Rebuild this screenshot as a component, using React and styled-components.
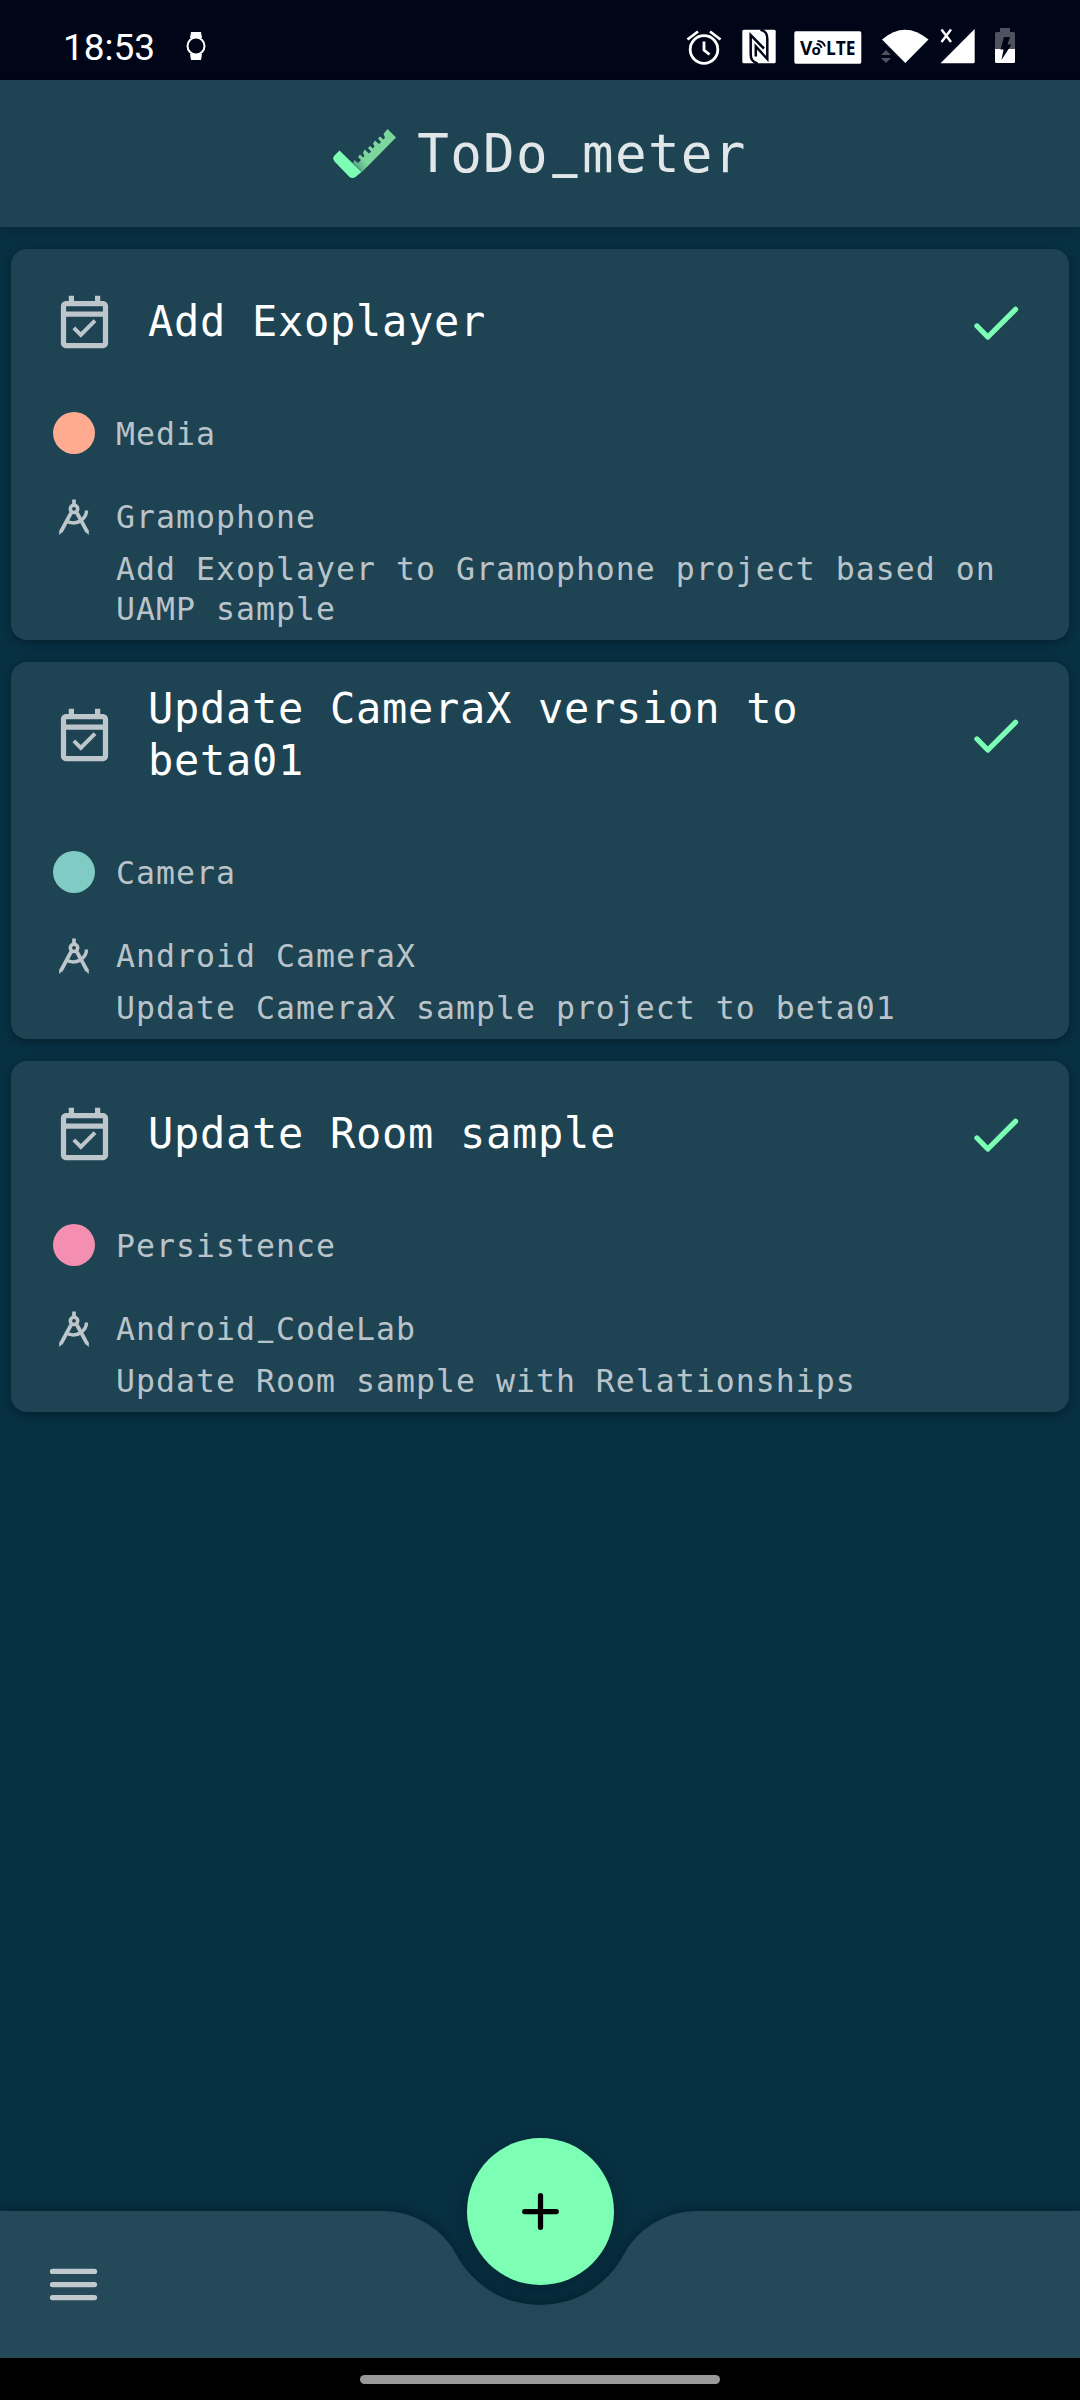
import React from "react";
import styled, { createGlobalStyle } from "styled-components";

const Global = createGlobalStyle`
  html, body { margin: 0; padding: 0; background: #073042; }
  * { box-sizing: border-box; }
  svg { display: block; flex: none; }
`;

const Screen = styled.div`
  width: 1080px;
  height: 2400px;
  display: flex;
  flex-direction: column;
  overflow: hidden;
  background: #073042;
  font-family: "DejaVu Sans Mono", "Liberation Mono", monospace;
`;

const StatusBar = styled.header`
  height: 80px;
  flex: none;
  display: flex;
  justify-content: space-between;
  background: #000518;
  color: #fff;
`;

const StatusLeft = styled.div`
  display: flex;
  align-items: flex-start;
  padding: 27px 0 0 63px;
  gap: 30px;
`;

const Clock = styled.span`
  width: 93px;
  font: 400 37px/42px Roboto, "Liberation Sans", sans-serif;
  letter-spacing: 0;
  white-space: nowrap;
`;

const WatchSvg = styled.svg`
  margin-top: 5px;
`;

const StatusRight = styled.div`
  display: flex;
  align-items: flex-start;
  padding: 27px 65px 0 0;
`;

const StatusIcon = styled.svg`
  margin-left: ${(p) => p.$gap || 0}px;
`;

const AppBar = styled.div`
  height: 147px;
  flex: none;
  display: flex;
  justify-content: center;
  align-items: center;
  gap: 21px;
  background: #1e4353;
  box-shadow: 0 3px 12px rgba(0, 0, 0, 0.15);
  z-index: 1;
`;

const AppTitle = styled.h1`
  margin: 0;
  font-size: 52.5px;
  font-weight: 400;
  line-height: 70px;
  letter-spacing: 1.35px;
  color: rgba(255, 255, 255, 0.87);
  white-space: nowrap;
`;

const Underscore = styled.span`
  display: inline-block;
  line-height: 1;
  transform: translateY(-0.15em) scale(0.8, 1.9);
  transform-origin: 48% 1.06em;
`;

const List = styled.main`
  flex: 1;
  display: flex;
  flex-direction: column;
  gap: 22px;
  padding: 22px 11px 0;
`;

const Card = styled.article`
  display: flex;
  flex-direction: column;
  padding: 0 42px 11px;
  border-radius: 16px;
  background: #1e4353;
  box-shadow: 0 3px 10px rgba(0, 0, 0, 0.3);
`;

const CardHead = styled.div`
  height: 151px;
  display: flex;
  align-items: center;
`;

const CardTitle = styled.h2`
  width: 770px;
  margin: 0 0 5px 32px;
  font-size: 42px;
  font-weight: 400;
  line-height: 52.4px;
  letter-spacing: 0.72px;
  color: #fff;
`;

const Done = styled.svg`
  margin-left: auto;
`;

const Meta = styled.div`
  height: 42px;
  display: flex;
  align-items: center;
  gap: 21px;
  margin-top: ${(p) => p.$top}px;
  font-size: 31.5px;
  line-height: 40px;
  letter-spacing: 1.03px;
  color: rgba(255, 255, 255, 0.7);
  white-space: nowrap;
`;

const TagName = styled.span`
  padding-top: 2px;
`;

const Dot = styled.i`
  width: 42px;
  height: 42px;
  border-radius: 50%;
  background: ${(p) => p.$color};
`;

const Description = styled.p`
  margin: 11px 0 0 63px;
  font-size: 31.5px;
  line-height: 40px;
  letter-spacing: 1.03px;
  color: rgba(255, 255, 255, 0.7);
`;

const BottomArea = styled.footer`
  position: relative;
  height: 147px;
  flex: none;
  display: flex;
  align-items: center;
  padding-left: 42px;
`;

const BarShape = styled.svg`
  position: absolute;
  inset: 0;
  overflow: visible;
  filter: drop-shadow(0 -1px 7px rgba(0, 0, 0, 0.3));
`;

const MenuButton = styled.button`
  position: relative;
  padding: 0;
  border: 0;
  background: none;
`;

const Fab = styled.button`
  position: absolute;
  left: 466.5px;
  top: -73.5px;
  width: 147px;
  height: 147px;
  display: grid;
  place-items: center;
  padding: 0;
  border: 0;
  border-radius: 50%;
  background: #7cffb5;
  box-shadow: 0 8px 20px rgba(0, 0, 0, 0.22);
`;

const NavBar = styled.div`
  height: 42px;
  flex: none;
  display: flex;
  justify-content: center;
  padding-top: 17px;
  background: #000;
`;

const Handle = styled.div`
  width: 360px;
  height: 9px;
  border-radius: 5px;
  background: #999;
`;

const muted = "#bcc6cb";

function Watch() {
  return (
    <WatchSvg width="20" height="28" viewBox="0 0 20 28" fill="#fff">
      <path d="M5 0H15L16 6H4ZM4 22H16L15 28H5Z" />
      <circle cx="10" cy="14" r="8.5" fill="#000518" stroke="#fff" strokeWidth="2" />
    </WatchSvg>
  );
}

function Alarm() {
  return (
    <StatusIcon width="36" height="38" viewBox="0 0 36 38" fill="none" stroke="#fff" strokeWidth="2.8">
      <circle cx="18" cy="22.5" r="13.8" />
      <path d="M18 14.5V23L23.5 27.5M1.5 12.5L12 4.5M34.5 12.5L24 4.5" />
    </StatusIcon>
  );
}

function Nfc() {
  return (
    <StatusIcon $gap={20} width="34" height="38" viewBox="0 0 34 38" fill="none">
      <rect x="0.3" y="2.7" width="33.4" height="33.6" rx="1.5" fill="#fff" />
      <g stroke="#000518" strokeWidth="2.5">
        <path d="M15.5 36.5C10 34.500 8.700 32 8.700 27V8L22 21.500" />
        <path d="M18.500 2.500C24 4.500 25.300 7 25.300 12V32L13.800 19.500V29.500" />
      </g>
    </StatusIcon>
  );
}

function Volte() {
  return (
    <StatusIcon $gap={18.5} width="68" height="38" viewBox="0 0 68 38">
      <rect x="0.3" y="4.3" width="67" height="32.4" rx="1.6" fill="#fff" />
      <g fill="#000518" fontFamily="Open Sans, sans-serif" fontWeight="700">
        <text x="6" y="27.6" fontSize="19">V</text>
        <text x="17.5" y="27.6" fontSize="15">o</text>
        <text x="32" y="27.6" fontSize="19" textLength="29.5" lengthAdjust="spacingAndGlyphs">LTE</text>
      </g>
      <path d="M22.500 17Q26.500 17 27.500 21M23.500 14Q29.500 14 31 19.500" fill="none" stroke="#000518" strokeWidth="1.8" />
    </StatusIcon>
  );
}

function Wifi() {
  return (
    <StatusIcon $gap={19} width="48" height="38" viewBox="0 0 48 38">
      <path d="M1 12.5Q24 -7 47.5 12.5L24.300 36Z" fill="#fff" />
      <path d="M0 28H10L5 23ZM0 31H10L5 36Z" fill="#50535f" />
    </StatusIcon>
  );
}

function Signal() {
  return (
    <StatusIcon $gap={11} width="36" height="38" viewBox="0 0 36 38" fill="#fff">
      <path d="M0.5 36.3L34.7 2V35Q34.7 36.3 33.4 36.3Z" />
      <path d="M1.500 2.500L11 15M11 2.500L1.500 15" stroke="#fff" strokeWidth="2.4" />
    </StatusIcon>
  );
}

function Battery() {
  return (
    <StatusIcon $gap={19} width="20" height="38" viewBox="0 0 20 38">
      <path d="M5 1H15V5H18.5Q20 5 20 6.5V22H0V6.5Q0 5 1.5 5H5Z" fill="#50535f" />
      <path d="M0 22H20V34.500Q20 36 18.500 36H1.500Q0 36 0 34.500Z" fill="#fff" />
      <path d="M9 10H15L12.500 17.500H16.500L6.500 33L8.500 22.500H5.500Z" fill="#000518" />
    </StatusIcon>
  );
}

function Logo() {
  return (
    <svg width="63" height="50" viewBox="0 0 63 50">
      <defs>
        <linearGradient id="fold" gradientUnits="userSpaceOnUse" x1="24" y1="37" x2="31" y2="31">
          <stop offset="0" stopColor="#5cae85" />
          <stop offset="1" stopColor="#7bd79c" />
        </linearGradient>
      </defs>
      <path d="M20 34L21.500 31L25 34L28 31L25 28L27 25.500L30 28.500L31.500 27L30 24L31.500 20.500L36 24.500L38 22.500L35 19L37 17L40 19.500L41.500 17.500L40 14.500L42 11.500L46 15L48 13L45 9.500L47 7.500L50.500 10.500L52 8.500L50.500 5L54.500 0L63 8.500L29 43Z" fill="url(#fold)" />
      <path d="M6.500 21.500L28.500 43L22.500 48Q19.500 50 16.500 48L1.500 32.500Q-1 29 1.500 26.500Z" fill="#7cffb5" />
    </svg>
  );
}

function Calendar() {
  return (
    <svg width="63" height="63" viewBox="0 0 24 24" fill={muted}>
      <path d="M16.530 11.060L15.470 10l-4.880 4.880-2.120-2.120-1.060 1.060L10.590 17l5.940-5.940zM19 3h-1V1h-2v2H8V1H6v2H5c-1.110 0-1.990.9-1.990 2L3 19c0 1.100.89 2 2 2h14c1.100 0 2-.9 2-2V5c0-1.100-.9-2-2-2zm0 16H5V9h14v10zM5 7V5h14v2H5z" />
    </svg>
  );
}

function Compass() {
  return (
    <svg width="42" height="42" viewBox="0 0 42 42" fill="none" stroke={muted} strokeWidth="3.700">
      <path d="M21 3.500V9" />
      <path d="M18 17L8 35.500M24 17L34 35.500" />
      <path d="M12.500 24.500Q21 29.500 28 24.500Q33.500 20.500 33.500 14.500" strokeWidth="3.400" />
      <circle cx="21" cy="12.800" r="3.700" strokeWidth="3.600" />
      <path d="M6.200 34L10 35.500L6.200 39ZM35.800 34L32 35.500L35.800 39Z" fill={muted} stroke="none" />
    </svg>
  );
}

function Label({ text }) {
  return text.split("_").map((part, i) => (
    <React.Fragment key={i}>
      {i > 0 && <Underscore>_</Underscore>}
      {part}
    </React.Fragment>
  ));
}

function Task({ title, twoLines, color, tag, project, children }) {
  return (
    <Card>
      <CardHead>
        <Calendar />
        <CardTitle>{title}</CardTitle>
        <Done width="63" height="63" viewBox="0 0 63 63" fill="none" stroke="#7cffb5" strokeWidth="5.3" strokeLinecap="round" strokeLinejoin="round">
          <path d="M13 33L23.800 44L51.500 16.300" />
        </Done>
      </CardHead>
      <Meta $top={twoLines ? 38 : 12}>
        <Dot $color={color} />
        <TagName>{tag}</TagName>
      </Meta>
      <Meta $top={42}>
        <Compass />
        <span>
          <Label text={project} />
        </span>
      </Meta>
      <Description>{children}</Description>
    </Card>
  );
}

export default function App() {
  return (
    <Screen>
      <Global />
      <StatusBar>
        <StatusLeft>
          <Clock>18:53</Clock>
          <Watch />
        </StatusLeft>
        <StatusRight>
          <Alarm />
          <Nfc />
          <Volte />
          <Wifi />
          <Signal />
          <Battery />
        </StatusRight>
      </StatusBar>
      <AppBar>
        <Logo />
        <AppTitle>
          <Label text="ToDo_meter" />
        </AppTitle>
      </AppBar>
      <List>
        <Task title="Add Exoplayer" color="#ffab91" tag="Media" project="Gramophone">
          Add Exoplayer to Gramophone project based on UAMP sample
        </Task>
        <Task title="Update CameraX version to beta01" twoLines color="#80cbc4" tag="Camera" project="Android CameraX">
          Update CameraX sample project to beta01
        </Task>
        <Task title="Update Room sample" color="#f48fb1" tag="Persistence" project="Android_CodeLab">
          Update Room sample with Relationships
        </Task>
      </List>
      <BottomArea>
        <BarShape width="1080" height="147" viewBox="0 0 1080 147">
          <path d="M0 0H383A84 84 0 0 1 456.900 44.500A94.500 94.500 0 0 0 623.100 44.500A84 84 0 0 1 697 0H1080V147H0Z" fill="#244959" />
        </BarShape>
        <MenuButton aria-label="Menu">
          <svg width="63" height="63" viewBox="0 0 63 63" stroke="#bfc9ce" strokeWidth="5.250" strokeLinecap="round">
            <path d="M10.500 18.400H52.500M10.500 31.500H52.500M10.500 44.600H52.500" />
          </svg>
        </MenuButton>
        <Fab aria-label="Add">
          <svg width="63" height="63" viewBox="0 0 63 63" stroke="#000" strokeWidth="5.250" strokeLinecap="round">
            <path d="M31.500 15.700V47.300M15.700 31.500H47.300" />
          </svg>
        </Fab>
      </BottomArea>
      <NavBar>
        <Handle />
      </NavBar>
    </Screen>
  );
}
